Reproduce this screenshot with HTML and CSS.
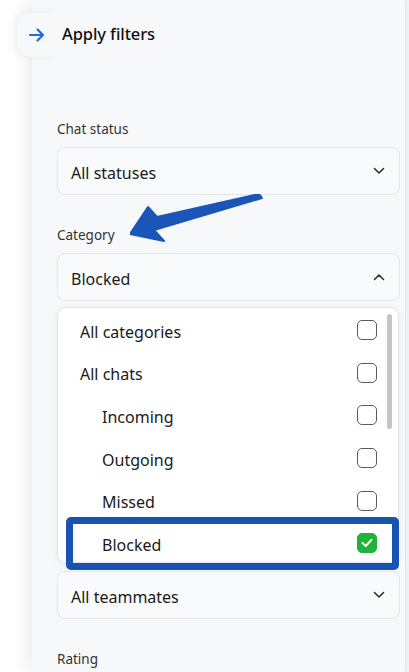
FILE: index.html
```html
<!DOCTYPE html>
<html lang="en">
<head>
<meta charset="utf-8">
<link rel="stylesheet" href="styles.css">
</head>
<body>
<div class="page">
  <div class="gutter"></div>
  <aside class="panel">
    <div class="tab">
      <svg width="18" height="16" viewBox="0 0 18 16"><path d="M2 8H15M9.5 2.5L15 8L9.5 13.5" fill="none" stroke="#1b6ee0" stroke-width="2.2" stroke-linecap="round" stroke-linejoin="round"/></svg>
    </div>
    <header class="header">Apply filters</header>
    <div class="content">
      <div class="group">
        <div class="label">Chat status</div>
        <div class="select"><span>All statuses</span><svg class="chev" width="12" height="8" viewBox="0 0 12 8"><path d="M1.5 1.5L6 6L10.5 1.5" fill="none" stroke="#333" stroke-width="1.6" stroke-linecap="round" stroke-linejoin="round"/></svg></div>
      </div>
      <div class="group cat">
        <div class="label">Category</div>
        <div class="select"><span>Blocked</span><svg class="chev" width="12" height="8" viewBox="0 0 12 8"><path d="M1.5 6.5L6 2L10.5 6.5" fill="none" stroke="#333" stroke-width="1.6" stroke-linecap="round" stroke-linejoin="round"/></svg></div>
        <div class="dropdown">
          <div class="list">
            <div class="row"><span>All categories</span><i class="box"></i></div>
            <div class="row"><span>All chats</span><i class="box"></i></div>
            <div class="row sub"><span>Incoming</span><i class="box"></i></div>
            <div class="row sub"><span>Outgoing</span><i class="box"></i></div>
            <div class="row sub"><span>Missed</span><i class="box"></i></div>
            <div class="row sub"><span>Blocked</span><i class="box on"><svg width="14" height="12" viewBox="0 0 14 12"><path d="M2.5 6L5.8 9L11.5 2.8" fill="none" stroke="#fff" stroke-width="2" stroke-linecap="round" stroke-linejoin="round"/></svg></i></div>
          </div>
          <div class="thumb"></div>
        </div>
        <div class="highlight"></div>
        <svg class="pointer" width="140" height="52" viewBox="0 0 140 52"><polygon points="0,40 18,13 27,23 129,0 132,4 24,36 34,47" fill="#1a55b8" stroke="#1a55b8" stroke-width="2" stroke-linejoin="round"/></svg>
      </div>
      <div class="group team">
        <div class="select"><span>All teammates</span><svg class="chev" width="12" height="8" viewBox="0 0 12 8"><path d="M1.5 1.5L6 6L10.5 1.5" fill="none" stroke="#333" stroke-width="1.6" stroke-linecap="round" stroke-linejoin="round"/></svg></div>
      </div>
      <div class="group">
        <div class="label">Rating</div>
      </div>
    </div>
  </aside>
  <div class="edge"></div>
</div>
</body>
</html>
```

FILE: styles.css
```css
html, body {
  margin: 0;
  padding: 0;
  background: #ffffff;
  font-family: "Noto Sans", "Open Sans", sans-serif;
  color: #1f1f1f;
}
.page {
  display: flex;
  width: 409px;
  height: 672px;
  overflow: hidden;
}
.gutter {
  width: 32px;
  flex: none;
  background: #ffffff;
}
.panel {
  position: relative;
  flex: 1;
  background: #f7f8fa;
  border-right: 1px solid #e3e4e7;
  box-shadow: -6px 0 14px rgba(0, 0, 0, 0.07);
}
.edge {
  width: 3px;
  flex: none;
  background: #f2f3f5;
}
.tab {
  position: absolute;
  left: -15px;
  top: 13px;
  width: 40px;
  height: 44px;
  border-radius: 12px 0 0 12px;
  background: #f7f8fa;
  box-shadow: -4px 0 8px rgba(0, 0, 0, 0.05);
  display: flex;
  align-items: center;
  padding-left: 11px;
  box-sizing: border-box;
}
.header {
  height: 70px;
  padding-left: 30px;
  font-size: 16.5px;
  font-weight: 500;
  line-height: 20px;
  padding-top: 24px;
  box-sizing: border-box;
  color: #111;
  letter-spacing: -0.1px;
}
.content {
  padding: 49px 5px 0 25px;
  display: flex;
  flex-direction: column;
  gap: 30px;
}
.group {
  display: flex;
  flex-direction: column;
  gap: 8px;
}
.cat {
  position: relative;
  z-index: 2;
}
.team {
  margin-top: 240px;
}
.label {
  font-size: 13.5px;
  line-height: 20px;
  color: #333;
}
.select {
  height: 48px;
  box-sizing: border-box;
  border: 1px solid #e5e6e8;
  border-radius: 8px;
  background: #f9fafb;
  display: flex;
  align-items: center;
  justify-content: space-between;
  padding: 3px 14px 0 13px;
  font-size: 16px;
  color: #1a1a1a;
}
.chev {
  display: block;
  margin-top: -3px;
}
.dropdown {
  position: absolute;
  left: 0;
  top: 82px;
  width: 342px;
  height: 256px;
  box-sizing: border-box;
  background: #ffffff;
  border: 1px solid #e2e3e5;
  border-radius: 8px;
  box-shadow: 0 2px 8px rgba(0, 0, 0, 0.06);
  overflow: hidden;
}
.list {
  padding-top: 1px;
}
.row {
  height: 42.6px;
  display: flex;
  align-items: center;
  justify-content: space-between;
  padding: 0 21px 0 22px;
  font-size: 16px;
  color: #1a1a1a;
}
.row span {
  padding-top: 3px;
}
.row.sub {
  padding-left: 44px;
}
.box {
  width: 20px;
  height: 20px;
  box-sizing: border-box;
  border: 1.5px solid #5a5a5a;
  border-radius: 5px;
  display: flex;
  align-items: center;
  justify-content: center;
}
.box.on {
  background: #1fb33a;
  border-color: #1fb33a;
}
.thumb {
  position: absolute;
  right: 6px;
  top: 6px;
  width: 5px;
  height: 115px;
  border-radius: 3px;
  background: #c5c5c5;
}
.highlight {
  position: absolute;
  left: 9px;
  top: 292px;
  width: 333px;
  height: 53px;
  box-sizing: border-box;
  border: 7.5px solid #1753b0;
  border-radius: 5px;
}
.pointer {
  position: absolute;
  left: 73px;
  top: -31px;
}
```
